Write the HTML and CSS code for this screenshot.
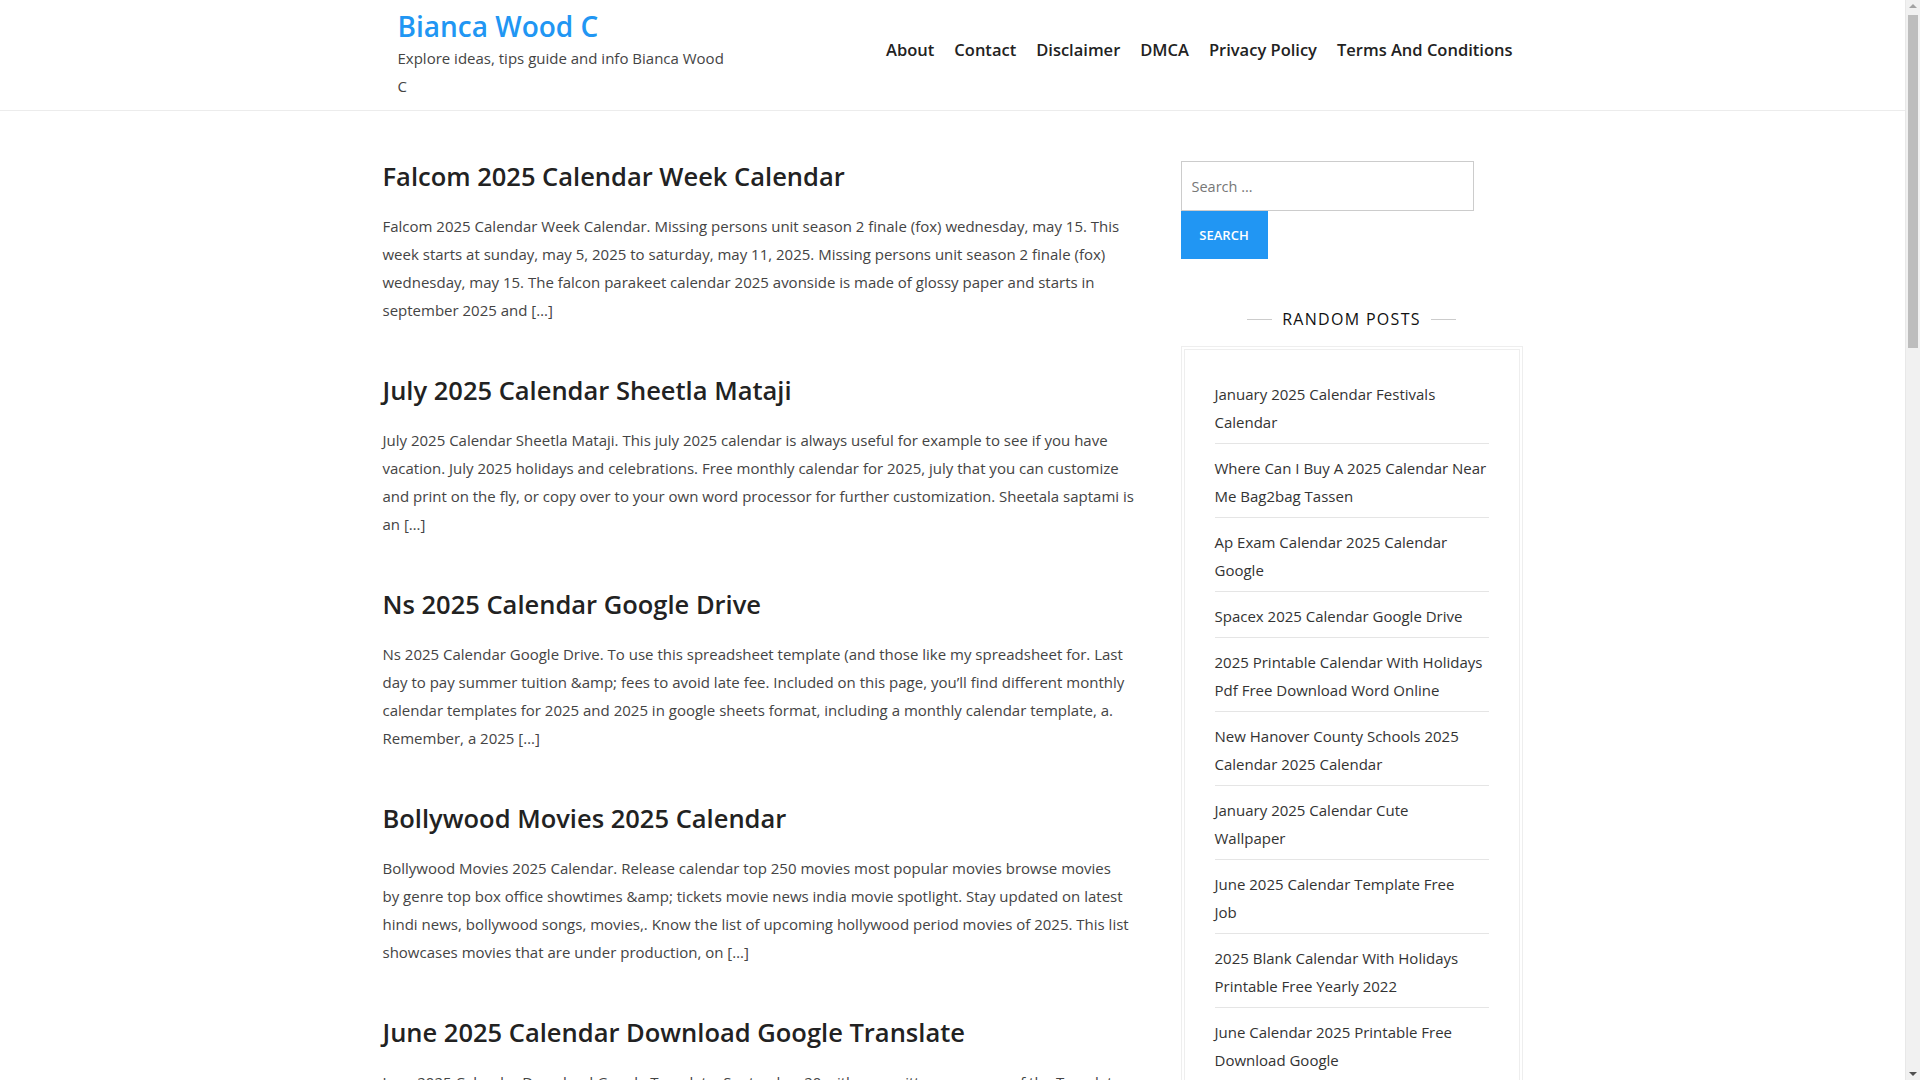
FILE: index.html
```html
<!DOCTYPE html>
<html lang="en">
<head>
<meta charset="utf-8">
<title>Bianca Wood C</title>
<link rel="stylesheet" href="styles.css">
</head>
<body>
<header class="site-header">
  <div class="container header-inner">
    <div class="branding">
      <a class="site-title" href="#">Bianca Wood C</a>
      <p class="tagline">Explore ideas, tips guide and info Bianca Wood<br>C</p>
    </div>
    <nav class="main-nav">
      <ul>
        <li><a href="#">About</a></li>
        <li><a href="#">Contact</a></li>
        <li><a href="#">Disclaimer</a></li>
        <li><a href="#">DMCA</a></li>
        <li><a href="#">Privacy Policy</a></li>
        <li><a href="#">Terms And Conditions</a></li>
      </ul>
    </nav>
  </div>
</header>

<div class="container content">
  <main class="posts">
    <article class="post">
      <h2 class="post-title"><a href="#">Falcom 2025 Calendar Week Calendar</a></h2>
      <p class="excerpt">Falcom 2025 Calendar Week Calendar. Missing persons unit season 2 finale (fox) wednesday, may 15. This<br>week starts at sunday, may 5, 2025 to saturday, may 11, 2025. Missing persons unit season 2 finale (fox)<br>wednesday, may 15. The falcon parakeet calendar 2025 avonside is made of glossy paper and starts in<br>september 2025 and […]</p>
    </article>
    <article class="post">
      <h2 class="post-title"><a href="#">July 2025 Calendar Sheetla Mataji</a></h2>
      <p class="excerpt">July 2025 Calendar Sheetla Mataji. This july 2025 calendar is always useful for example to see if you have<br>vacation. July 2025 holidays and celebrations. Free monthly calendar for 2025, july that you can customize<br>and print on the fly, or copy over to your own word processor for further customization. Sheetala saptami is<br>an […]</p>
    </article>
    <article class="post">
      <h2 class="post-title"><a href="#">Ns 2025 Calendar Google Drive</a></h2>
      <p class="excerpt">Ns 2025 Calendar Google Drive. To use this spreadsheet template (and those like my spreadsheet for. Last<br>day to pay summer tuition &amp;amp; fees to avoid late fee. Included on this page, you’ll find different monthly<br>calendar templates for 2025 and 2025 in google sheets format, including a monthly calendar template, a.<br>Remember, a 2025 […]</p>
    </article>
    <article class="post">
      <h2 class="post-title"><a href="#">Bollywood Movies 2025 Calendar</a></h2>
      <p class="excerpt">Bollywood Movies 2025 Calendar. Release calendar top 250 movies most popular movies browse movies<br>by genre top box office showtimes &amp;amp; tickets movie news india movie spotlight. Stay updated on latest<br>hindi news, bollywood songs, movies,. Know the list of upcoming hollywood period movies of 2025. This list<br>showcases movies that are under production, on […]</p>
    </article>
    <article class="post">
      <h2 class="post-title"><a href="#">June 2025 Calendar Download Google Translate</a></h2>
      <p class="excerpt">June 2025 Calendar Download Google Translate. September 20 with our written summary of the Translate<br>tool, you can now download your own calendar. Translate the monthly pages for free and print them at<br>home for your office, school or family planning needs every single month of the year 2025 and […]</p>
    </article>
  </main>

  <aside class="sidebar">
    <form class="search-form">
      <input class="search-field" type="search" placeholder="Search …">
      <button class="search-submit" type="button">Search</button>
    </form>

    <section class="widget">
      <h3 class="widget-title"><span>Random Posts</span></h3>
      <div class="widget-box">
        <ul class="widget-list">
          <li><a href="#">January 2025 Calendar Festivals<br>Calendar</a></li>
          <li><a href="#">Where Can I Buy A 2025 Calendar Near<br>Me Bag2bag Tassen</a></li>
          <li><a href="#">Ap Exam Calendar 2025 Calendar<br>Google</a></li>
          <li><a href="#">Spacex 2025 Calendar Google Drive</a></li>
          <li><a href="#">2025 Printable Calendar With Holidays<br>Pdf Free Download Word Online</a></li>
          <li><a href="#">New Hanover County Schools 2025<br>Calendar 2025 Calendar</a></li>
          <li><a href="#">January 2025 Calendar Cute<br>Wallpaper</a></li>
          <li><a href="#">June 2025 Calendar Template Free<br>Job</a></li>
          <li><a href="#">2025 Blank Calendar With Holidays<br>Printable Free Yearly 2022</a></li>
          <li><a href="#">June Calendar 2025 Printable Free<br>Download Google</a></li>
        </ul>
      </div>
    </section>
  </aside>
</div>

<div class="scrollbar" aria-hidden="true">
  <span class="sb-arrow sb-up"></span>
  <span class="sb-thumb"></span>
  <span class="sb-arrow sb-down"></span>
</div>
</body>
</html>
```

FILE: styles.css
```css
* { box-sizing: border-box; }

html, body {
  margin: 0;
  padding: 0;
  background: #fff;
}

body {
  margin-right: 15px;
  font-family: "Open Sans", "Liberation Sans", sans-serif;
  font-size: 15px;
  line-height: 28px;
  color: #444;
}

a { text-decoration: none; color: inherit; }

.container {
  width: 1140px;
  margin: 0 auto;
}

/* Header */
.site-header {
  border-bottom: 1px solid #ececec;
  height: 111px;
}

.header-inner {
  display: flex;
  justify-content: space-between;
  align-items: flex-start;
  padding: 8px 0 0 15px;
}

.branding { width: 340px; }

.site-title {
  display: block;
  font-size: 28px;
  line-height: 36px;
  font-weight: 600;
  color: #2196f3;
}

.tagline {
  margin: 0;
  font-size: 15px;
  line-height: 28px;
  color: #444;
  white-space: nowrap;
}

.main-nav { padding-top: 30px; }

.main-nav ul {
  list-style: none;
  margin: 0;
  padding: 0;
  display: flex;
}

.main-nav li a {
  display: block;
  padding: 0 10px;
  font-size: 16.5px;
  line-height: 24px;
  font-weight: 600;
  color: #222;
}

/* Content */
.content {
  display: flex;
  justify-content: space-between;
  padding-top: 50px;
}

.posts { width: 750px; }

.post { margin-bottom: 51px; }

.post-title {
  margin: 0 0 21px;
  font-size: 25.5px;
  line-height: 30px;
  font-weight: 600;
  color: #222;
}

.excerpt {
  margin: 0;
  white-space: nowrap;
}

/* Sidebar */
.sidebar { width: 342px; }

.search-form {
  display: flex;
  flex-direction: column;
  align-items: flex-start;
}

.search-field {
  width: 293px;
  height: 50px;
  border: 1px solid #ccc;
  padding: 0 10px;
  font-family: inherit;
  font-size: 14.5px;
  color: #444;
  outline: none;
}
.search-field::placeholder { color: #777; }

.search-submit {
  width: 87px;
  height: 48px;
  border: 0;
  background: #2196f3;
  color: #fff;
  font-family: inherit;
  font-size: 13px;
  font-weight: 600;
  text-transform: uppercase;
}

.widget { margin-top: 48px; }

.widget-title {
  margin: 0 0 15px;
  display: flex;
  justify-content: center;
  align-items: center;
  gap: 10px;
  font-size: 16px;
  line-height: 24px;
  font-weight: 500;
  letter-spacing: 1.3px;
  text-transform: uppercase;
  color: #111;
}
.widget-title::before,
.widget-title::after {
  content: "";
  width: 25px;
  height: 1px;
  background: #ccc;
}

.widget-box {
  border: 1px solid #eee;
  padding: 2px;
}

.widget-list {
  list-style: none;
  margin: 0;
  border: 1px solid #eee;
  padding: 20px 30px;
}

.widget-list li {
  padding: 10px 0 7px;
  border-bottom: 1px solid #e5e5e5;
  color: #333;
  white-space: nowrap;
}

/* Browser scrollbar as seen in the screenshot */
.scrollbar {
  position: fixed;
  top: 0;
  right: 0;
  width: 15px;
  height: 100vh;
  background: #f1f1f1;
  border-left: 1px solid #e8e8e8;
}

.sb-thumb {
  position: absolute;
  top: 15px;
  left: 2px;
  width: 10px;
  height: 333px;
  background: #bdbdbd;
}

.sb-arrow {
  position: absolute;
  left: 3px;
  width: 0;
  height: 0;
  border-left: 4px solid transparent;
  border-right: 4px solid transparent;
}

.sb-up {
  top: 4px;
  border-bottom: 4px solid #a3a3a3;
}

.sb-down {
  bottom: 4px;
  border-top: 4px solid #505050;
}
```
